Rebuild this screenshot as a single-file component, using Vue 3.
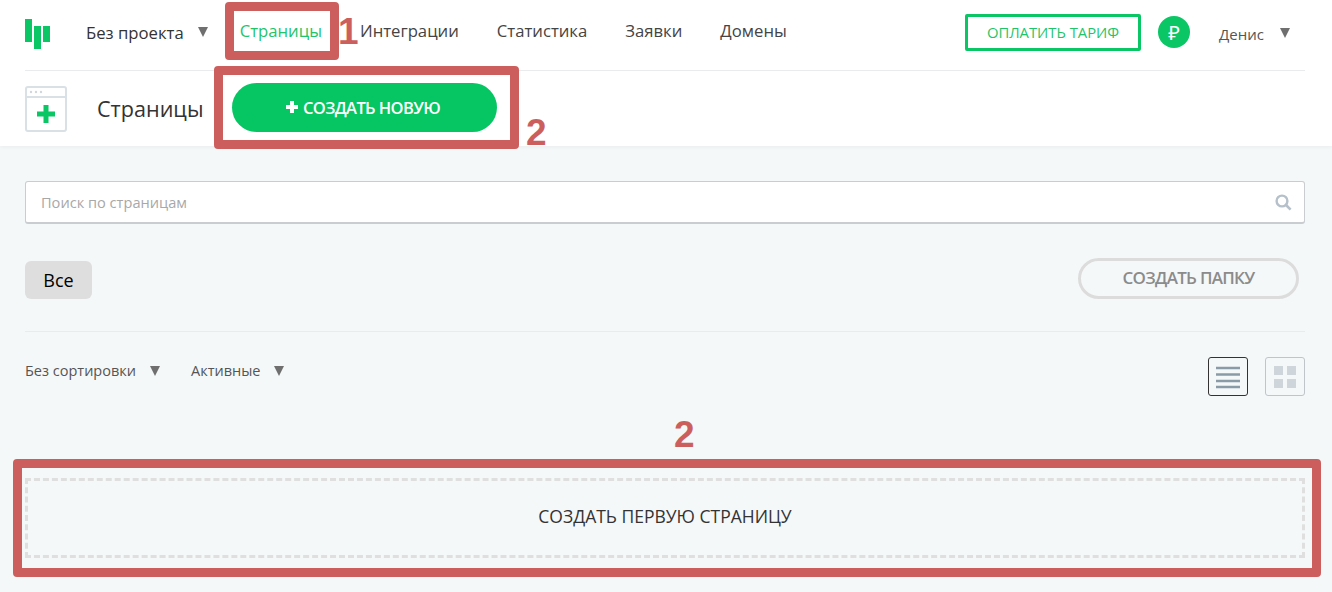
<template>
  <div class="page">
    <header class="header">
      <div class="topbar">
        <svg class="logo" width="25" height="30" viewBox="0 0 25 30">
          <rect x="0" y="0" width="7" height="23" fill="#0bc665" />
          <rect x="9" y="7" width="7" height="23" fill="#0bc665" />
          <rect x="18" y="7" width="7" height="16" fill="#0bc665" />
        </svg>
        <div class="project">Без проекта<span class="caret project-caret"></span></div>
        <nav class="nav">
          <a v-for="item in navItems" :key="item" :class="{ active: item === 'Страницы' }">{{ item }}</a>
        </nav>
        <button class="pay">ОПЛАТИТЬ ТАРИФ</button>
        <div class="ruble">₽</div>
        <div class="user">Денис<span class="caret user-caret"></span></div>
      </div>
      <div class="titlebar">
        <svg class="page-icon" width="42" height="46" viewBox="0 0 42 46">
          <rect x="1" y="1" width="40" height="44" rx="2" fill="#fff" stroke="#d9e0e6" stroke-width="2" />
          <path d="M1 11h40" stroke="#d9e0e6" stroke-width="2" />
          <circle cx="6" cy="6" r="1.2" fill="#d0d7dd" />
          <circle cx="11" cy="6" r="1.2" fill="#d0d7dd" />
          <circle cx="16" cy="6" r="1.2" fill="#d0d7dd" />
          <path d="M21 19v18M12 28h18" stroke="#0bc665" stroke-width="5" />
        </svg>
        <h1>Страницы</h1>
        <button class="create">
          <svg width="12" height="12" viewBox="0 0 12 12"><path d="M6 0v12M0 6h12" stroke="#fff" stroke-width="4" /></svg>
          СОЗДАТЬ НОВУЮ
        </button>
      </div>
    </header>

    <main class="content">
      <div class="search">
        <span>Поиск по страницам</span>
        <svg width="17" height="17" viewBox="0 0 17 17">
          <circle cx="7" cy="7" r="5.4" fill="none" stroke="#b6c0ca" stroke-width="2.4" />
          <path d="M11 11l4.6 4.6" stroke="#b6c0ca" stroke-width="2.6" />
        </svg>
      </div>

      <div class="folders">
        <button class="tag">Все</button>
        <button class="folder">СОЗДАТЬ ПАПКУ</button>
      </div>

      <div class="filters">
        <div class="filter sort">Без сортировки<span class="caret"></span></div>
        <div class="filter status">Активные<span class="caret"></span></div>
        <div class="views">
          <button class="view current">
            <svg width="26" height="24" viewBox="0 0 26 24">
              <path d="M1 3h24M1 9.500h24M1 16h24M1 22h24" stroke="#8a9ba8" stroke-width="2.400" />
            </svg>
          </button>
          <button class="view">
            <svg width="24" height="24" viewBox="0 0 24 24">
              <rect x="1" y="1" width="9" height="9" fill="#ced6db" />
              <rect x="14" y="1" width="9" height="9" fill="#ced6db" />
              <rect x="1" y="14" width="9" height="9" fill="#ced6db" />
              <rect x="14" y="14" width="9" height="9" fill="#ced6db" />
            </svg>
          </button>
        </div>
      </div>

      <div class="first">СОЗДАТЬ ПЕРВУЮ СТРАНИЦУ</div>
    </main>

    <!-- annotations drawn over the screenshot -->
    <div class="mark mark-nav"></div>
    <div class="mark mark-create"></div>
    <div class="mark mark-first"></div>
    <span class="num num-1">1</span>
    <span class="num num-2">2</span>
    <span class="num num-3">2</span>
  </div>
</template>

<script setup>
const navItems = ['Страницы', 'Интеграции', 'Статистика', 'Заявки', 'Домены']
</script>

<style>
html, body { margin: 0; background: #f5f8f9; }
</style>

<style scoped>
.page { position: relative; height: 592px; overflow: hidden; background: #f5f8f9; font-family: "Open Sans", "Noto Sans", sans-serif; color: #333; }
button { font-family: inherit; cursor: pointer; padding: 0; }

.header { background: #fff; height: 146px; padding: 0 27px 0 25px; box-shadow: 0 1px 4px rgba(0,0,0,.05); box-sizing: border-box; }
.topbar { display: flex; align-items: center; height: 70px; border-bottom: 1px solid #e9ebec; position: relative; }
.logo { margin-top: -2px; flex: none; }
.project { margin-left: 36px; font-size: 16.700px; color: #333; display: flex; align-items: center; margin-top: -6px; }
.caret { display: inline-block; width: 0; height: 0; border-left: 5px solid transparent; border-right: 5px solid transparent; border-top: 10px solid #6f6f6f; margin-left: 14px; }
.project-caret { margin-left: 14px; margin-top: -1px; }
.nav { display: flex; gap: 38px; margin-left: 32px; font-size: 16.700px; color: #444; margin-top: -10px; }
.nav .active { color: #1fc46b; }
.pay { margin-left: auto; width: 176px; height: 37px; border: 3px solid #0bc665; border-radius: 2px; background: #fff; color: #1fc46b; font-size: 14.800px; font-weight: 500; margin-top: -6px; }
.ruble { width: 32px; height: 32px; margin-left: 17px; border-radius: 50%; background: #0bc665; color: #fff; font-size: 20px; font-weight: 400; display: flex; align-items: center; justify-content: center; margin-top: -6px; }
.user { margin-left: 29px; width: 86px; font-size: 15px; color: #555; display: flex; align-items: center; margin-top: -2px; }
.user-caret { margin-top: -3px; margin-left: 16px; }

.titlebar { display: flex; align-items: center; height: 75px; }
.page-icon { flex: none; margin-top: 1px; }
h1 { margin: 0 0 0 30px; font-size: 21.600px; font-weight: 400; color: #333; }
.create { margin-left: 29px; width: 265px; height: 49px; margin-top: -3px; padding-right: 4px; border: none; border-radius: 25px; background: #06c663; color: #fff; font-size: 16.500px; font-weight: 600; letter-spacing: -.6px; display: flex; align-items: center; justify-content: center; gap: 5px; }

.content { padding: 35px 27px 0 25px; }
.search { height: 43px; box-sizing: border-box; border: 1px solid #c9cdd0; border-bottom-width: 2px; border-radius: 3px; background: #fff; display: flex; align-items: center; justify-content: space-between; padding: 0 12px 0 15px; font-size: 14.600px; color: #a8a8a8; }
.folders { display: flex; justify-content: space-between; align-items: center; padding: 34px 6px 32px 0; border-bottom: 1px solid #e9ecee; }
.tag { width: 67px; height: 38px; margin-top: 3px; border: none; border-radius: 6px; background: #dedede; color: #000; font-size: 18px; }
.folder { width: 221px; height: 41px; padding-bottom: 2px; border: 3px solid #dcdcdc; border-radius: 21px; background: transparent; color: #8b8b8b; font-size: 17px; font-weight: 600; letter-spacing: -.7px; }

.filters { display: flex; align-items: flex-start; padding-top: 25px; font-size: 14.500px; color: #555; }
.filter { display: flex; align-items: center; height: 26px; }
.filter .caret { margin-left: 14px; margin-top: 2px; }
.status .caret { margin-left: 13px; }
.sort { margin-right: 31px; }
.views { margin-left: auto; display: flex; gap: 17px; }
.view { width: 40px; height: 39px; border: 1px solid #bfc5c9; border-radius: 3px; background: transparent; display: flex; align-items: center; justify-content: center; }
.view.current { border-color: #333; }

.first { margin-top: 82px; height: 80px; padding-bottom: 4px; box-sizing: border-box; border: 3px dashed #dfdfdf; display: flex; align-items: center; justify-content: center; font-size: 17.500px; color: #333; }

.mark { position: absolute; box-sizing: border-box; border: 9px solid #cc5f5e; border-radius: 4px; }
.mark-nav { left: 225px; top: 2px; width: 114px; height: 58px; }
.mark-create { left: 214px; top: 66px; width: 305px; height: 83px; }
.mark-first { left: 13px; top: 459px; width: 1308px; height: 118px; }
.num { position: absolute; color: #cc5f5e; font-family: "Liberation Sans", sans-serif; font-weight: 700; font-size: 37px; line-height: 37px; }
.num-1 { left: 338px; top: 13px; }
.num-2 { left: 526px; top: 114px; }
.num-3 { left: 674px; top: 416px; }
</style>
